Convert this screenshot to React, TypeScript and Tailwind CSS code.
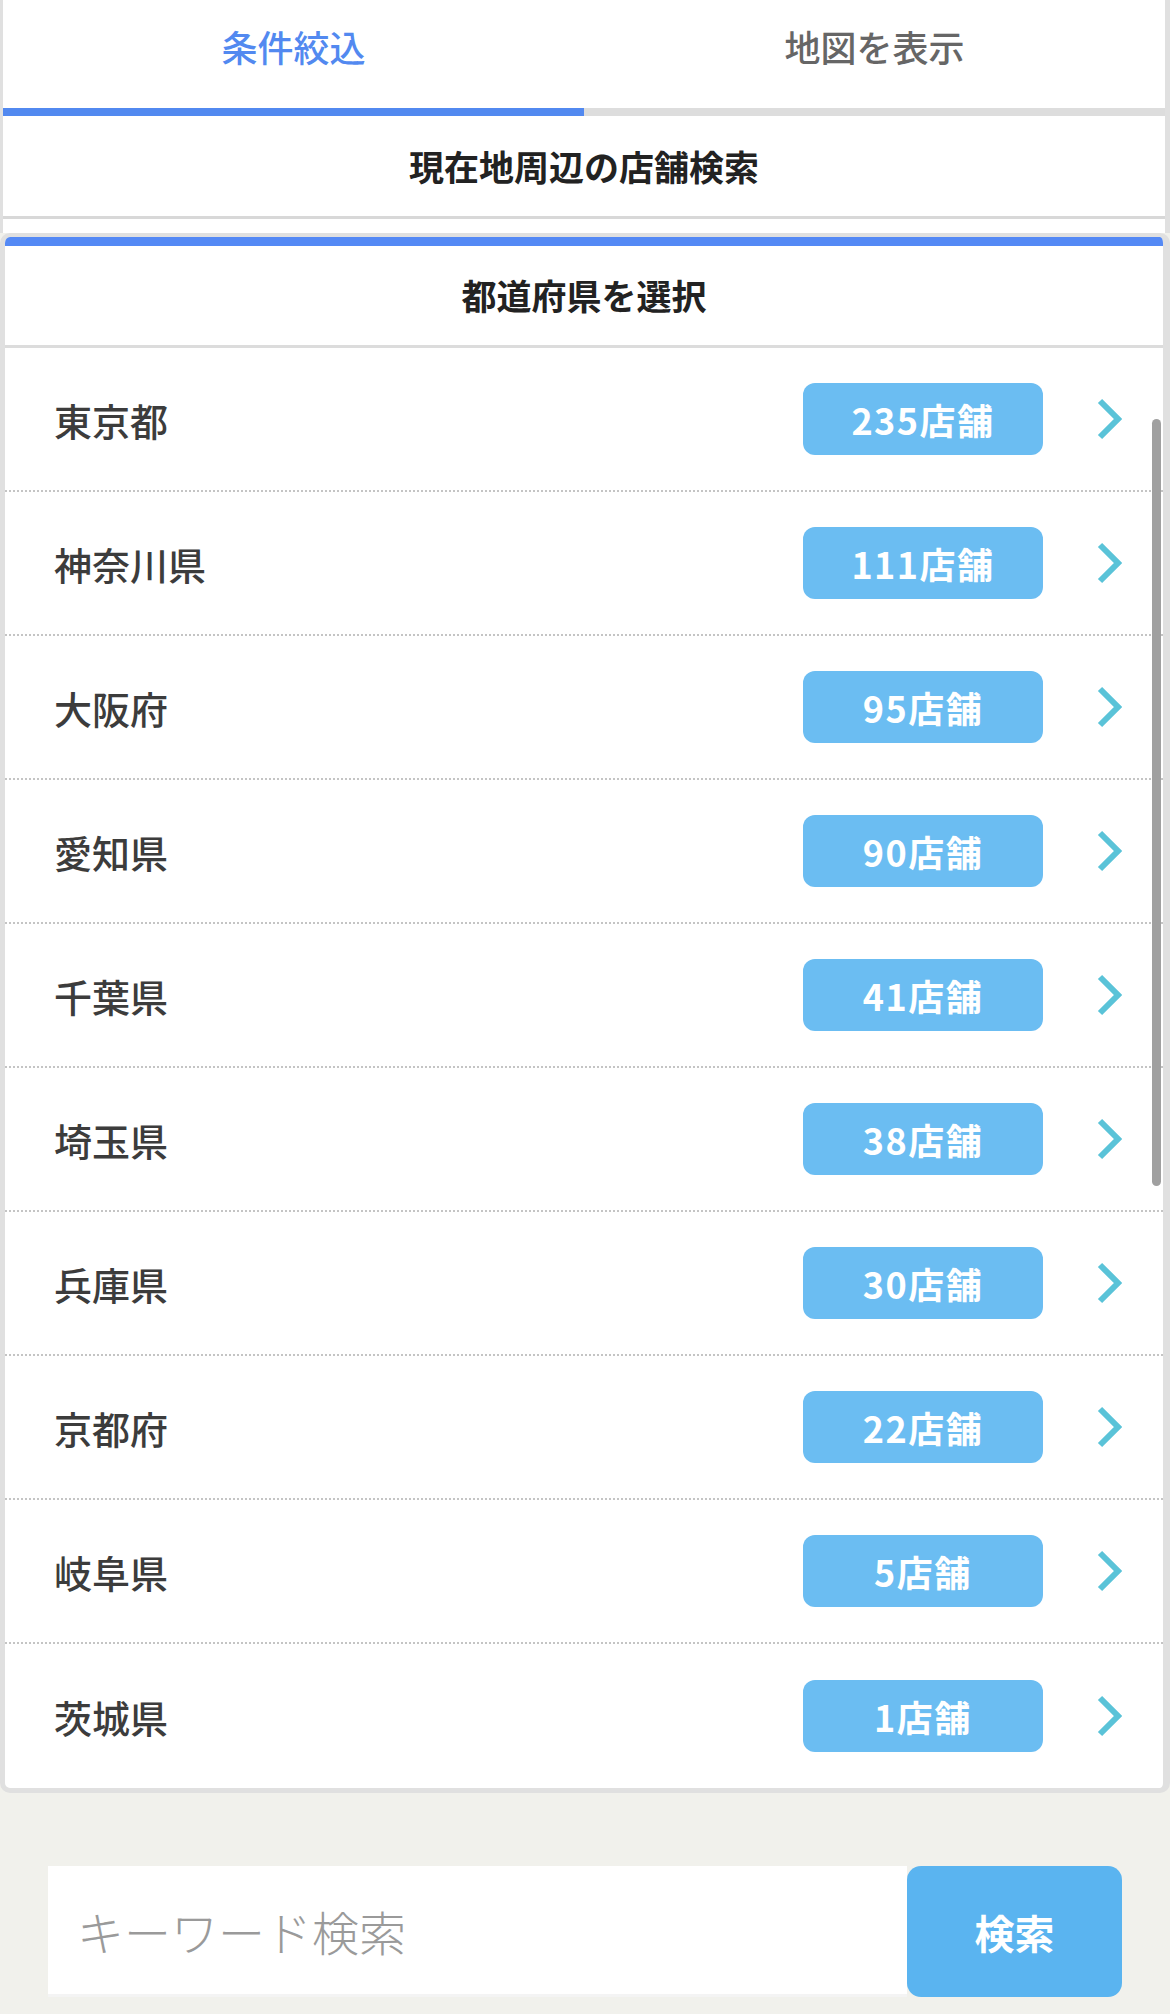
import React, { useState } from 'react'

const prefectures = [
  { name: '東京都', count: 235 },
  { name: '神奈川県', count: 111 },
  { name: '大阪府', count: 95 },
  { name: '愛知県', count: 90 },
  { name: '千葉県', count: 41 },
  { name: '埼玉県', count: 38 },
  { name: '兵庫県', count: 30 },
  { name: '京都府', count: 22 },
  { name: '岐阜県', count: 5 },
  { name: '茨城県', count: 1 },
]

function Chevron() {
  return (
    <svg width="26" height="44" viewBox="0 0 26 44" fill="none">
      <polyline points="4,4 22,22 4,40" stroke="#5ac3d8" strokeWidth="6" strokeLinecap="butt" strokeLinejoin="miter" />
    </svg>
  )
}

export default function App() {
  const [tab, setTab] = useState<'filter' | 'map'>('filter')
  const [keyword, setKeyword] = useState('')

  return (
    <div
      className="w-full min-h-[2014px] bg-[#f1f1ec]"
      style={{ fontFamily: '"Noto Sans CJK JP", "Noto Sans", sans-serif' }}
    >
      {/* tabs and current location search */}
      <div className="bg-white border-l-[3px] border-r-[5px] border-[#e0e0e0] pb-[14px]">
        <div className="grid grid-cols-2">
          <button
            onClick={() => setTab('filter')}
            className={`h-[116px] pb-[16px] flex items-center justify-center text-[36px] font-medium border-b-[8px] ${tab === 'filter' ? 'text-[#5289f0] border-[#5289f0]' : 'text-[#666] border-[#dddddd]'}`}
          >
            条件絞込
          </button>
          <button
            onClick={() => setTab('map')}
            className={`h-[116px] pb-[16px] flex items-center justify-center text-[36px] font-medium border-b-[8px] ${tab === 'map' ? 'text-[#5289f0] border-[#5289f0]' : 'text-[#666] border-[#dddddd]'}`}
          >
            地図を表示
          </button>
        </div>
        <div className="h-[103px] flex items-center justify-center text-[35px] font-bold text-[#222] border-b-[3px] border-[#d8d8d8]">
          現在地周辺の店舗検索
        </div>
      </div>

      {/* prefecture list */}
      <div className="relative bg-white border-l-[5px] border-r-[7px] border-t-[4px] border-b-[5px] border-[#e0e0e0] rounded-[10px] overflow-hidden">
        <div className="h-[9px] bg-[#5489f5]" />
        <div className="h-[102px] flex items-center justify-center text-[35px] font-bold text-[#222] border-b-[3px] border-[#dcdcdc]">
          都道府県を選択
        </div>
        {prefectures.map((p, i) => (
          <div
            key={p.name}
            className={`h-[144px] flex items-center pl-[49px] pr-[41px] ${i < prefectures.length - 1 ? 'border-b-2 border-dotted border-[#c4c4c4]' : ''}`}
          >
            <span className="flex-1 text-[38px] font-medium text-[#3c3c3c]">{p.name}</span>
            <span className="w-[240px] h-[72px] rounded-[12px] bg-[#6bbdf2] flex items-center justify-center text-white text-[36px] font-bold tracking-[1.5px]">
              {p.count}店舗
            </span>
            <span className="ml-[53px] flex items-center">
              <Chevron />
            </span>
          </div>
        ))}
        <div className="absolute right-[2px] top-[182px] w-[9px] h-[767px] rounded-full bg-[#a0a0a0]" />
      </div>

      {/* keyword search */}
      <div className="pt-[73px] px-[48px] pb-[18px]">
        <div className="flex h-[131px]">
          <input
            value={keyword}
            onChange={(e) => setKeyword(e.target.value)}
            placeholder="キーワード検索"
            className="flex-1 min-w-0 h-full bg-white pl-[29px] text-[47px] font-light text-[#333] placeholder:text-[#9a9a9a] outline-none border-b-[3px] border-[#f4f4f4]"
          />
          <button className="w-[215px] h-full rounded-[14px] bg-[#5ab4f0] text-white text-[40px] font-bold">
            検索
          </button>
        </div>
      </div>
    </div>
  )
}
